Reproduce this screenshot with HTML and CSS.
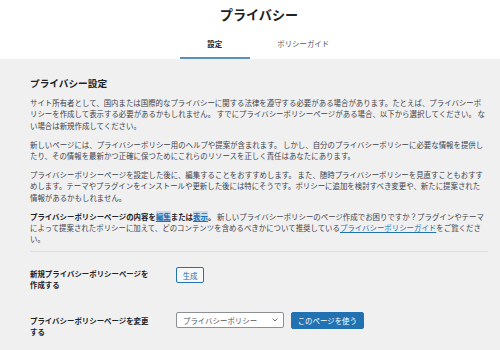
FILE: index.html
```html
<!DOCTYPE html>
<html lang="ja">
  <head>
    <meta charset="UTF-8" />
    <meta name="viewport" content="width=device-width, initial-scale=1.0" />
    <title>プライバシー</title>
    <link rel="stylesheet" href="styles.css">
  </head>
  <body>
    <div class="page-header">
      <h1>プライバシー</h1>
      <nav class="tabs">
        <a href="#" class="tab active">設定</a>
        <a href="#" class="tab">ポリシーガイド</a>
      </nav>
    </div>

    <div class="content">
      <h2>プライバシー設定</h2>
      <p>サイト所有者として、国内または国際的なプライバシーに関する法律を遵守する必要がある場合があります。たとえば、プライバシーポリシーを作成して表示する必要があるかもしれません。 すでにプライバシーポリシーページがある場合、以下から選択してください。 ない場合は新規作成してください。</p>
      <p>新しいページには、プライバシーポリシー用のヘルプや提案が含まれます。 しかし、自分のプライバシーポリシーに必要な情報を提供したり、その情報を最新かつ正確に保つためにこれらのリソースを正しく責任はあなたにあります。</p>
      <p>プライバシーポリシーページを設定した後に、編集することをおすすめします。 また、随時プライバシーポリシーを見直すこともおすすめします。テーマやプラグインをインストールや更新した後には特にそうです。ポリシーに追加を検討すべき変更や、新たに提案された情報があるかもしれません。</p>
      <p class="last"><strong>プライバシーポリシーページの内容を<a href="#" class="hl">編集</a>または<a href="#" class="hl">表示</a>。</strong> 新しいプライバシーポリシーのページ作成でお困りですか？プラグインやテーマによって提案されたポリシーに加えて、どのコンテンツを含めるべきかについて推奨している<a href="#" class="link">プライバシーポリシーガイド</a>をご覧ください。</p>

      <div class="form-table">
        <div class="form-row">
          <div class="label">新規プライバシーポリシーページを作成する</div>
          <div class="field">
            <button class="button generate">生成</button>
          </div>
        </div>
        <div class="form-row">
          <div class="label">プライバシーポリシーページを変更する</div>
          <div class="field">
            <span class="select-wrap">
              <select class="select">
                <option>プライバシーポリシー</option>
              </select>
              <svg class="chevron" width="6" height="4" viewBox="0 0 6 4">
                <path d="M0.6 0.6 L3 3 L5.4 0.6" fill="none" stroke="#50575e" stroke-width="0.9" />
              </svg>
            </span>
            <button class="button primary">このページを使う</button>
          </div>
        </div>
      </div>
    </div>
  </body>
</html>
```

FILE: styles.css
```css
* {
  box-sizing: border-box;
}
body {
  margin: 0;
  background-color: #f0f0f1;
  font-family: "Noto Sans CJK JP", "Noto Sans", sans-serif;
  font-size: 7.43px;
  line-height: 11.2px;
  color: #3c434a;
  text-spacing-trim: space-all;
}

/* header with title and tabs */
.page-header {
  background-color: #fff;
  padding: 6px 12px 0 30px;
  text-align: center;
}
.page-header h1 {
  margin: 0;
  font-size: 13.1px;
  line-height: 17px;
  font-weight: 600;
  color: #1d2327;
}
.tabs {
  display: grid;
  grid-template-columns: 1fr 1fr;
  width: max-content;
  margin: 10.8px auto 0;
}
.tab {
  display: block;
  margin: 0 9.14px;
  padding: 4.6px 9.14px 9.3px;
  color: #50575e;
  text-decoration: none;
}
.tab.active {
  font-weight: 600;
  color: #1d2327;
  box-shadow: inset 0 -2px #5a8fc0;
}

/* main settings */
.content {
  padding: 0 12.5px 0 30px;
}
.content h2 {
  margin: 18.2px 0 6.6px;
  font-size: 9.66px;
  line-height: 13.5px;
  font-weight: 600;
  color: #1d2327;
}
.content p {
  margin: 0 0 8px;
}
.content p.last {
  margin-bottom: 6.4px;
}
.content strong {
  font-weight: 600;
  color: #1d2327;
}
.hl {
  color: #2271b1;
  background-color: #c9dcef;
  text-decoration: underline;
}
.link {
  color: #2271b1;
  text-decoration: underline;
}

.form-table {
  border-top: 1px solid #dcdcde;
  padding-top: 4px;
}
.form-row {
  display: grid;
  grid-template-columns: 146px auto;
  padding: 12.3px 0;
}
.label {
  width: 122px;
  font-weight: 600;
  color: #1d2327;
}
.field {
  display: flex;
  align-items: flex-start;
  gap: 7px;
  margin-top: -3.3px;
}

.button {
  height: 17px;
  padding: 0 5.7px;
  border-radius: 2px;
  border: 1px solid #2271b1;
  font-family: inherit;
  font-size: 7.43px;
  line-height: 15px;
  cursor: pointer;
}
.generate {
  margin-top: 2px;
  height: 16.5px;
  background-color: #f6f7f7;
  color: #2271b1;
}
.primary {
  background-color: #2271b1;
  color: #fff;
}

.select-wrap {
  position: relative;
  display: block;
}
.select {
  display: block;
  width: 108px;
  height: 16.5px;
  padding: 0 0 0 6px;
  border: 1px solid #8c8f94;
  border-radius: 2px;
  background-color: #fff;
  font-family: inherit;
  font-size: 7.43px;
  color: #50575e;
  appearance: none;
  -webkit-appearance: none;
}
.chevron {
  position: absolute;
  right: 6px;
  top: 6.5px;
}
```
